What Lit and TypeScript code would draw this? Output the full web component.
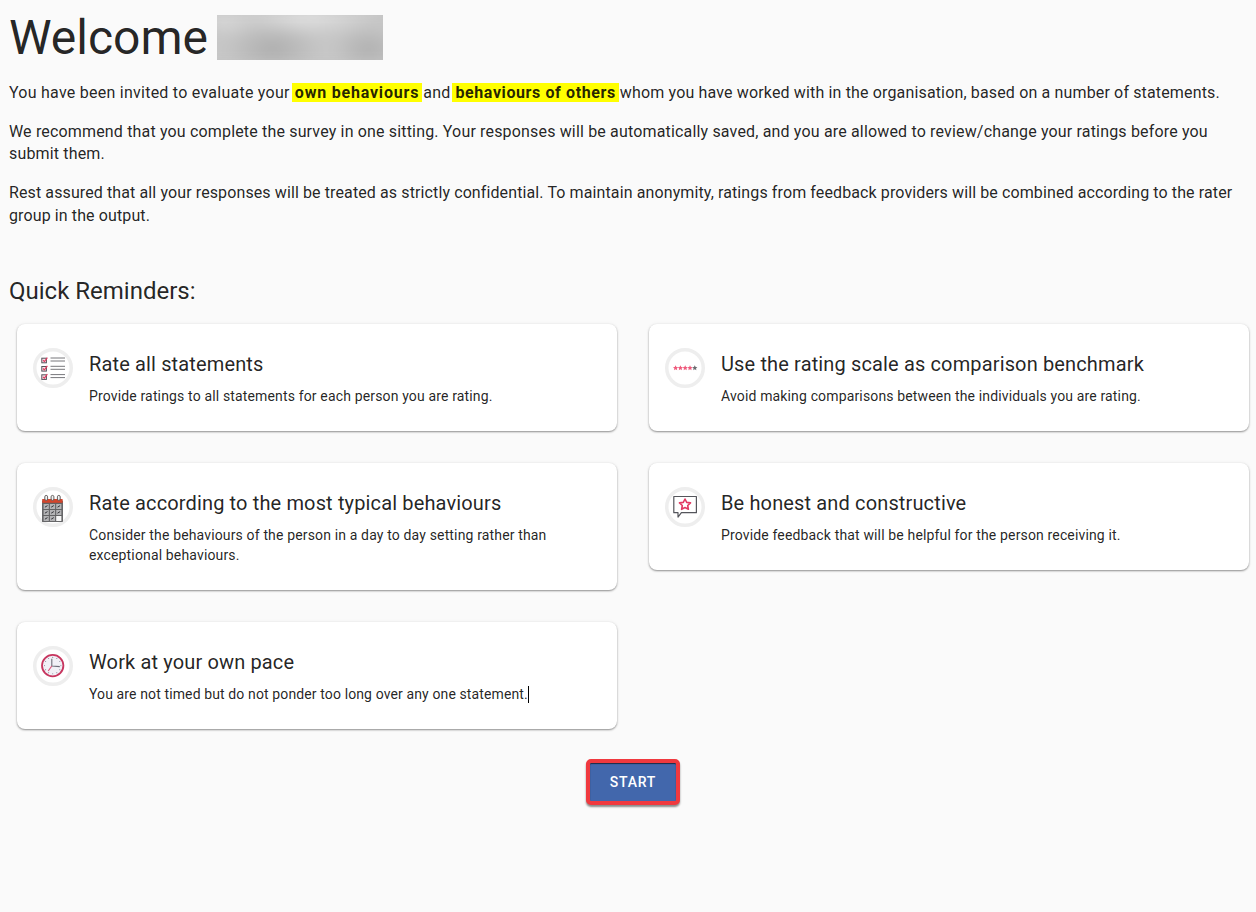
import { LitElement, html, css, svg } from "lit";
import { customElement } from "lit/decorators.js";
import { classMap } from "lit/directives/class-map.js";

const listIcon = svg`
  ${[0, 1, 2].map((i) => svg`
    <g transform="translate(0 ${i * 8.3})">
      <rect x="8.8" y="10.2" width="4.6" height="4.6" fill="#f6e4e9" stroke="#55525a" stroke-width="1"/>
      <path d="M10 12.2l1.4 1.4 3-4" fill="none" stroke="#e2395f" stroke-width="1.1"/>
      <path d="M17.5 10h14.5M17.5 13h14.5" stroke="#77777b" stroke-width="1"/>
    </g>`)}
`;

const starsIcon = svg`
  ${[0, 1, 2, 3, 4].map((i) => svg`
    <path transform="translate(${10.6 + i * 4.8} 19.8)" d="M0-2.5.8-.8 2.6-.6 1.2.6 1.6 2.4 0 1.5-1.6 2.4-1.2.6-2.6-.6-.8-.8Z" fill="${i === 4 ? "#6b6b70" : "#ef5a7c"}"/>`)}
`;

const calendarIcon = svg`
  <rect x="9.5" y="14" width="20" height="20.5" fill="#636364" stroke="#555557" stroke-width=".8"/>
  <rect x="9.2" y="12" width="20.4" height="3.8" fill="#d2452c"/>
  ${[13.2, 19.5, 25.8].map((x) => svg`<rect x="${x - 1.4}" y="8.4" width="2.8" height="5" rx="1.4" fill="#f3f3f3" stroke="#55504f" stroke-width=".9"/>`)}
  ${[17, 23, 29].flatMap((y) => [10.6, 16.9, 23.2].map((x) => svg`
    <rect x="${x}" y="${y}" width="5.2" height="5" fill="${y === 29 && x > 20 ? "#f6f6f6" : "#b4b4b6"}"/>
    ${y === 29 && x > 20 ? "" : svg`<path d="M${x + 1.3} ${y + 3.2}l2.6-1.6" stroke="#333338" stroke-width="1"/>`}`))}
`;

const speechIcon = svg`
  <path d="M8.8 9.5h22.6v16.2H16.4l-3.4 4.4v-4.4H8.8Z" fill="#fff" stroke="#55565c" stroke-width="1.2" stroke-linejoin="round"/>
  <path d="M20 12l1.7 3.4 3.8.5-2.8 2.6.7 3.8-3.4-1.8-3.4 1.8.7-3.8-2.8-2.6 3.8-.5Z" fill="#fff" stroke="#e23a63" stroke-width="1.6" stroke-linejoin="round"/>
`;

const clockIcon = svg`
  <circle cx="19.7" cy="19.6" r="10.7" fill="#f1f0f6" stroke="#c7365f" stroke-width="1.8"/>
  ${[0, 30, 60, 90, 120, 150, 180, 210, 240, 270, 300, 330].map((a) => svg`<circle cx="19.7" cy="11.4" r=".55" fill="#8f8f9e" transform="rotate(${a} 19.7 19.6)"/>`)}
  <path d="M18.8 20V12.8M18.8 20l8 .6" stroke="#6c6c78" stroke-width="1.1" fill="none"/>
  <path d="M18.8 20l-3.6 5" stroke="#dd4f75" stroke-width="1.1"/>
`;

interface Reminder { icon: unknown; title: string; text: string; caret?: boolean }

const reminders: Reminder[] = [
  { icon: listIcon, title: "Rate all statements", text: "Provide ratings to all statements for each person you are rating." },
  { icon: starsIcon, title: "Use the rating scale as comparison benchmark", text: "Avoid making comparisons between the individuals you are rating." },
  { icon: calendarIcon, title: "Rate according to the most typical behaviours", text: "Consider the behaviours of the person in a day to day setting rather than exceptional behaviours." },
  { icon: speechIcon, title: "Be honest and constructive", text: "Provide feedback that will be helpful for the person receiving it." },
  { icon: clockIcon, title: "Work at your own pace", text: "You are not timed but do not ponder too long over any one statement.", caret: true },
];

@customElement("app-root")
export class AppRoot extends LitElement {
  static styles = css`
    :host {
      display: block;
      min-height: 912px;
      box-sizing: border-box;
      background: #fafafa;
      color: rgba(0, 0, 0, 0.87);
      font-family: Roboto, sans-serif;
      padding: 15px 7px 0 9px;
    }
    .heading {
      display: flex;
      align-items: flex-start;
      gap: 9px;
      height: 45px;
    }
    h1 {
      margin: 0;
      font-size: 48px;
      font-weight: 400;
      line-height: 45px;
      font-family: Roboto, sans-serif;
    }
    .blur {
      width: 166px;
      height: 45px;
      overflow: hidden;
      background: #c4c4c4;
    }
    .blur-inner {
      width: 100%;
      height: 100%;
      filter: blur(5px);
      transform: scale(1.2);
      background:
        radial-gradient(ellipse 40px 22px at 60px 32px, #aeaeae, transparent),
        radial-gradient(ellipse 30px 20px at 140px 32px, #b0b0b0, transparent),
        radial-gradient(ellipse 60px 18px at 90px 4px, #e2e2e2, transparent),
        radial-gradient(ellipse 30px 14px at 20px 8px, #d8d8d8, transparent),
        #c6c6c6;
    }
    p {
      margin: 0 0 16.6px;
      font-family: Roboto, sans-serif;
      font-size: 16px;
      line-height: 22.4px;
      letter-spacing: 0.15px;
      color: rgba(0, 0, 0, 0.87);
    }
    .wide { letter-spacing: 0.25px; }
    .mid { letter-spacing: 0.165px; }
    .narrow { letter-spacing: 0.11px; }
    .intro {
      padding-top: 22px;
    }
    mark {
      background: #ffff00;
      color: inherit;
      font-weight: 700;
      letter-spacing: 0.6px;
      padding: 0 3px;
      margin: 0 -3px 0 -2px;
    }
    mark.short { letter-spacing: 0.8px; }
    h2 {
      margin: 48px 0 0;
      font-size: 24px;
      font-weight: 400;
      line-height: 32px;
    }
    .grid {
      display: grid;
      grid-template-columns: 600px 600px;
      gap: 32px;
      align-items: start;
      padding: 17px 0 0 8px;
    }
    .card {
      display: flex;
      gap: 16px;
      padding: 24px 16px 25px;
      background: #fff;
      border-radius: 8px;
      box-shadow: 0 1px 2px rgba(0, 0, 0, 0.42), 0 0 4px rgba(0, 0, 0, 0.05);
    }
    .icon {
      flex: none;
      width: 40px;
      height: 40px;
    }
    .icon svg { display: block; }
    h3 {
      margin: 0 0 6px;
      font-size: 20px;
      font-weight: 400;
      line-height: 32px;
      letter-spacing: 0.14px;
    }
    .desc {
      font-size: 14px;
      line-height: 20px;
      letter-spacing: 0.15px;
      margin: 0;
    }
    .desc.tight { letter-spacing: 0.12px; }
    .caret {
      display: inline-block;
      width: 1px;
      height: 17px;
      background: #000;
      vertical-align: -4px;
    }
    .actions {
      display: flex;
      justify-content: center;
      padding: 30px 0 0 8px;
    }
    button {
      width: 94px;
      height: 46px;
      box-sizing: border-box;
      background: #4267ac;
      border: 4px solid #f0393f;
      border-radius: 5px;
      color: #fff;
      font-family: Roboto, sans-serif;
      font-size: 14px;
      font-weight: 500;
      letter-spacing: 0.75px;
      box-shadow: 0 2px 2px rgba(0, 0, 0, 0.45), inset 0 1px 1px rgba(0, 0, 0, 0.6);
      padding: 0;
    }
  `;

  render() {
    return html`
      <div class="heading">
        <h1>Welcome</h1>
        <div class="blur"><div class="blur-inner"></div></div>
      </div>
      <div class="intro">
        <p><span class="wide">You have been invited to evaluate your</span> <mark class="short">own behaviours</mark> and <mark>behaviours of others</mark> whom you have worked with in the organisation, based on a number of statements.</p>
        <p class="mid">We recommend that you complete the survey in one sitting. Your responses will be automatically saved, and you are allowed to review/change your ratings before you submit them.</p>
        <p class="narrow">Rest assured that all your responses will be treated as strictly confidential. To maintain anonymity, ratings from feedback providers will be combined according to the rater group in the output.</p>
      </div>
      <h2>Quick Reminders:</h2>
      <div class="grid">
        ${reminders.map((r) => html`
          <div class="card">
            <div class="icon">
              <svg width="40" height="40" viewBox="0 0 40 40">
                <circle cx="20" cy="20" r="18.25" fill="#fff" stroke="#eeeeee" stroke-width="3.5"/>
                ${r.icon}
              </svg>
            </div>
            <div>
              <h3>${r.title}</h3>
              <div class=${classMap({ desc: true, tight: !!r.caret })}>${r.text}${r.caret ? html`<span class="caret"></span>` : ""}</div>
            </div>
          </div>`)}
      </div>
      <div class="actions"><button>START</button></div>
    `;
  }
}
